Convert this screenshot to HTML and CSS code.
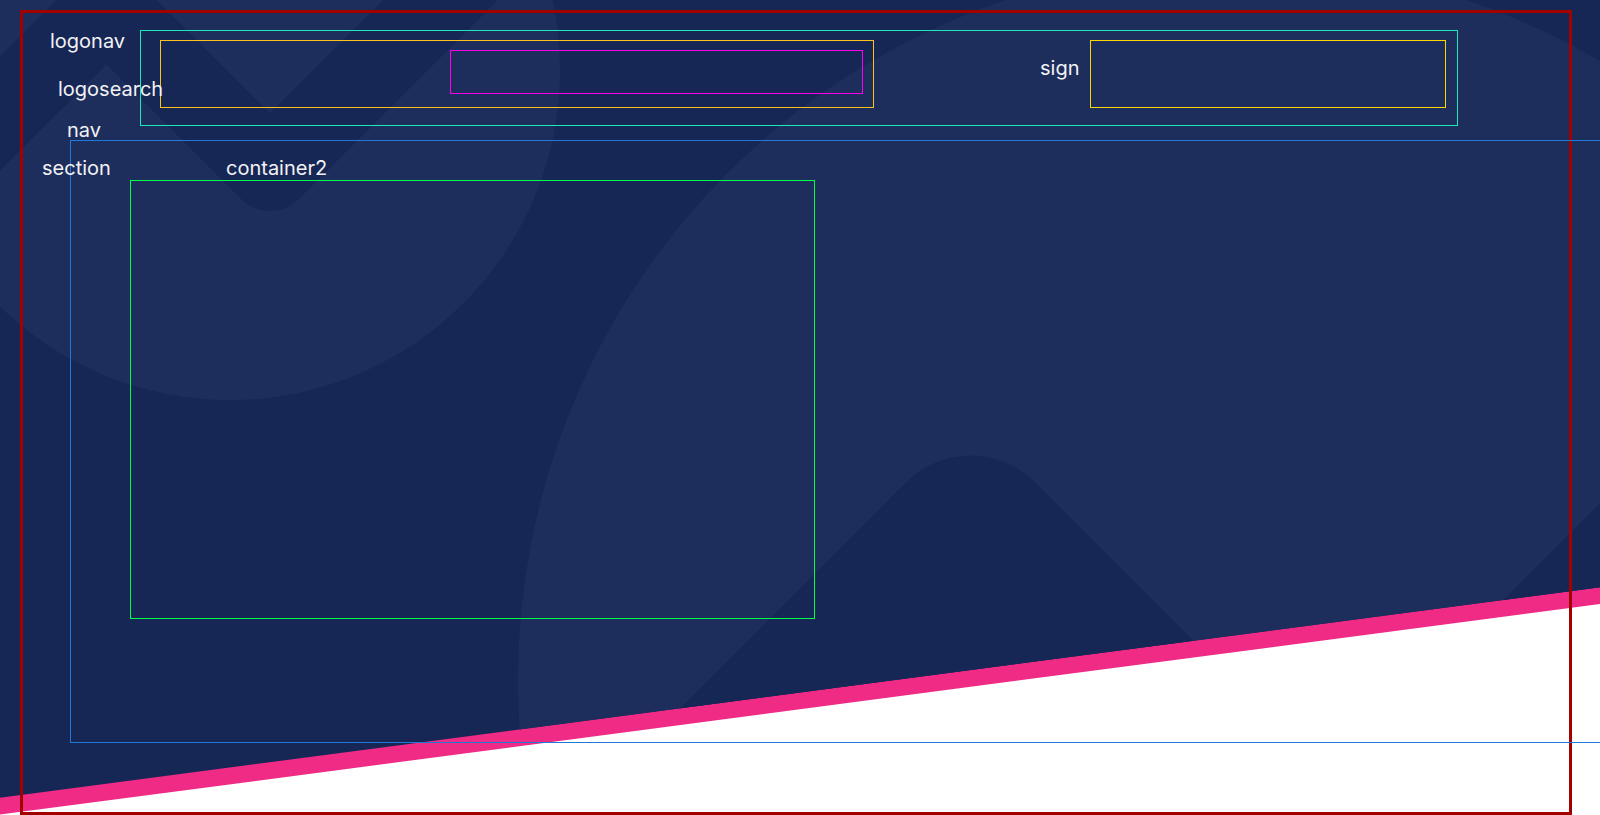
FILE: index.html
```html
<!DOCTYPE html>
<html lang="en">
<head>
<meta charset="utf-8">
<title>Layout</title>
<link rel="stylesheet" href="styles.css">
</head>
<body>
  <div class="backdrop" aria-hidden="true">
    <svg width="1600" height="815" viewBox="0 0 1600 815">
      <defs>
        <clipPath id="navyClip"><polygon points="0,0 1600,0 1600,587.3 0,797.7"/></clipPath>
      </defs>
      <rect width="1600" height="815" fill="#ffffff"/>
      <polygon points="0,0 1600,0 1600,604 0,814.6" fill="#ef2b86"/>
      <g clip-path="url(#navyClip)">
        <rect width="1600" height="815" fill="#162756"/>
        <circle cx="230" cy="70" r="330" fill="#1e2e5c"/>
        <circle cx="1236" cy="680" r="718" fill="#1e2e5c"/>
        <polyline points="-200,313.5 106.5,7 270,170.5 600,-159.5" fill="none" stroke="#162756" stroke-width="81" stroke-linejoin="round"/>
        <polyline points="400,1117 970.5,546.5 1328,904 1900,332" fill="none" stroke="#162756" stroke-width="182" stroke-linejoin="round"/>
      </g>
    </svg>
  </div>

  <div class="page">
    <header class="logonav">
      <span class="label lbl-logonav">logonav</span>
      <div class="logosearch">
        <span class="label lbl-logosearch">logosearch</span>
        <div class="search"></div>
      </div>
      <div class="sign">
        <span class="label lbl-sign">sign</span>
      </div>
    </header>
    <section class="section">
      <span class="label lbl-nav">nav</span>
      <span class="label lbl-section">section</span>
      <div class="container2">
        <span class="label lbl-container2">container2</span>
      </div>
    </section>
  </div>
</body>
</html>
```

FILE: styles.css
```css
html, body {
  margin: 0;
  padding: 0;
  height: 100%;
  overflow: hidden;
}

body {
  position: relative;
  font-family: Inter, "Noto Sans", sans-serif;
  color: #f2f2f4;
}

.backdrop {
  position: absolute;
  top: 0;
  left: 0;
  z-index: 0;
}

.backdrop svg {
  display: block;
}

.page {
  position: relative;
  z-index: 1;
  box-sizing: border-box;
  width: 97%;
  height: 805px;
  margin: 10px 0 0 20px;
  padding-top: 17px;
  border: 3px solid #a30000;
}

.logonav {
  position: relative;
  box-sizing: border-box;
  display: flex;
  align-items: flex-start;
  width: 1318px;
  height: 96px;
  margin-left: 117px;
  padding: 9px 11px 0 19px;
  border: 1px solid #1de9b6;
}

.logosearch {
  position: relative;
  box-sizing: border-box;
  display: flex;
  justify-content: flex-end;
  width: 714px;
  height: 68px;
  padding: 9px 10px 0 0;
  border: 1px solid #ffc21a;
}

.search {
  box-sizing: border-box;
  width: 413px;
  height: 44px;
  border: 1px solid #ff00ee;
}

.sign {
  position: relative;
  box-sizing: border-box;
  width: 356px;
  height: 68px;
  margin-left: auto;
  border: 1px solid #ffd600;
}

.section {
  position: relative;
  box-sizing: border-box;
  width: 100%;
  height: 603px;
  margin: 14px 0 0 47px;
  padding: 39px 0 0 59px;
  border: 1px solid #1e7ad6;
}

.container2 {
  position: relative;
  box-sizing: border-box;
  width: 685px;
  height: 439px;
  border: 1px solid #00ff44;
}

.label {
  position: absolute;
  font-size: 20px;
  line-height: 24px;
  white-space: nowrap;
}

.lbl-logonav { left: -91px; top: -2px; }
.lbl-logosearch { left: -103px; top: 36px; }
.lbl-sign { left: -51px; top: 15px; }
.lbl-nav { left: -4px; top: -23px; }
.lbl-section { left: -29px; top: 15px; }
.lbl-container2 { left: 95px; top: -25px; }
```
